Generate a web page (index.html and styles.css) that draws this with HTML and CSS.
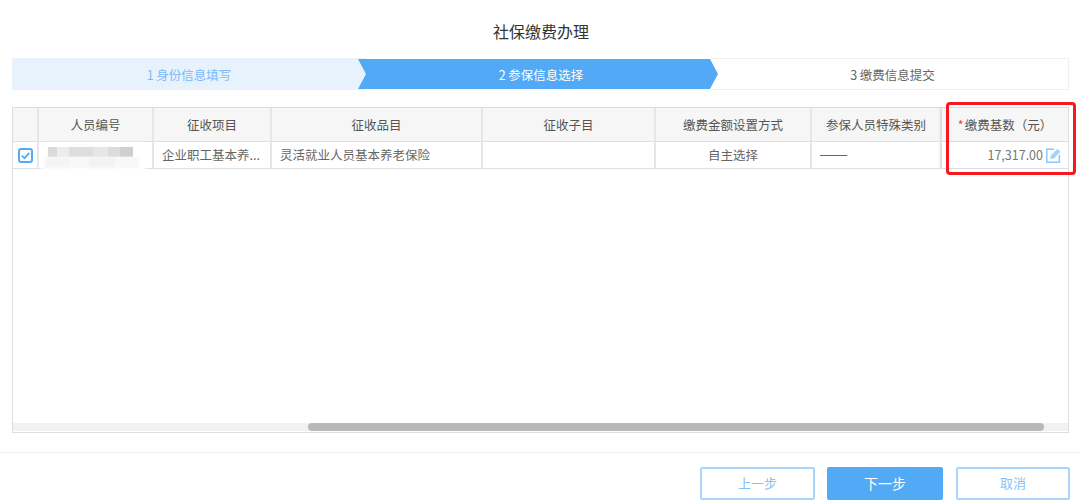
FILE: index.html
```html
<!DOCTYPE html>
<html lang="zh-CN">
<head>
<meta charset="utf-8">
<title>社保缴费办理</title>
<link rel="stylesheet" href="styles.css">
</head>
<body>
<div class="page">
  <h1 class="title">社保缴费办理</h1>
  <div class="steps">
    <div class="step step-done">1 身份信息填写</div>
    <div class="step step-active">2 参保信息选择</div>
    <div class="step step-todo">3 缴费信息提交</div>
  </div>
  <div class="table">
    <div class="row row-head">
      <div class="cell"></div>
      <div class="cell center">人员编号</div>
      <div class="cell center">征收项目</div>
      <div class="cell center">征收品目</div>
      <div class="cell center">征收子目</div>
      <div class="cell center">缴费金额设置方式</div>
      <div class="cell center">参保人员特殊类别</div>
      <div class="cell center fixed"><span class="req">*</span>缴费基数（元）</div>
    </div>
    <div class="row row-body">
      <div class="cell center">
        <span class="checkbox">
          <svg viewBox="0 0 12 12" width="11" height="11"><path d="M2 6.2 L5 9 L10 3.2" fill="none" stroke="#52a9f5" stroke-width="2"/></svg>
        </span>
      </div>
      <div class="cell"></div>
      <div class="cell">企业职工基本养...</div>
      <div class="cell">灵活就业人员基本养老保险</div>
      <div class="cell"></div>
      <div class="cell center">自主选择</div>
      <div class="cell dash">——</div>
      <div class="cell end fixed">
        <span class="amount">17,317.00</span>
        <svg class="edit" viewBox="0 0 15 15" width="15" height="15">
          <path d="M8 1.2 H0.8 V14.2 H13.4 V7" fill="none" stroke="#8cc8f9" stroke-width="1.5"/>
          <path d="M3.8 11.6 L4.6 7.6 L11.4 0.6 L14.8 3.8 L7.8 10.8 Z" fill="#a3d3fa" stroke="#fff" stroke-width="0.6"/>
        </svg>
      </div>
    </div>
    <div class="table-space"></div>
    <div class="scrollbar"><div class="thumb"></div></div>
    <div class="redacted">
      <span class="smear-a"></span>
      <span class="smear-b"></span>
      <span class="smear-c"></span>
    </div>
    <div class="highlight"></div>
  </div>
  <div class="footer">
    <button class="btn btn-prev">上一步</button>
    <button class="btn btn-next">下一步</button>
    <button class="btn btn-cancel">取消</button>
  </div>
</div>
</body>
</html>
```
FILE: styles.css
```css
* { box-sizing: border-box; }
html, body { margin: 0; padding: 0; background: #fff; }
body {
  width: 1080px;
  height: 502px;
  overflow: hidden;
  font-family: "Noto Sans CJK SC", "Noto Sans", sans-serif;
  font-size: 12.5px;
  color: #666;
}
.page { display: flex; flex-direction: column; height: 502px; }
.title {
  margin: 0;
  height: 58px;
  padding: 19px 0 0 2px;
  text-align: center;
  font-size: 16px;
  line-height: 24px;
  font-weight: 400;
  color: #333;
}
.steps {
  display: flex;
  height: 32px;
  margin: 0 11px 0 12px;
}
.step {
  display: flex;
  align-items: center;
  justify-content: center;
  height: 32px;
}
.step-done {
  width: 354px;
  background: #e7f2fd;
  color: #79bbf8;
}
.step-active {
  width: 360px;
  margin-left: -8px;
  padding-left: 6px;
  background: #52a9f5;
  color: #fff;
  position: relative;
  clip-path: polygon(0 1px, 352px 1px, 360px 16px, 352px 31px, 0 31px, 8px 16px);
}
.step-todo {
  width: 359px;
  margin-left: -8px;
  padding-left: 7px;
  border: 1px solid #f1f1f1;
  border-left: 0;
}
.table {
  position: relative;
  display: flex;
  flex-direction: column;
  height: 326px;
  margin: 17px 11px 0 12px;
  border: 1px solid #ddd;
}
.row {
  display: grid;
  grid-template-columns: 26px 115px 118px 211px 173px 156px 130px 1fr;
  border-bottom: 1px solid #e0e0e0;
}
.row-head { height: 34px; background: #f6f6f6; color: #555; }
.row-body { height: 27px; }
.cell {
  display: flex;
  align-items: center;
  min-width: 0;
  padding: 0 8px 2px;
  border-right: 2px solid #e6e6e6;
  white-space: nowrap;
}
.row-head .cell { padding-bottom: 0; }
.cell:last-child { border-right: 0; }
.center { justify-content: center; padding: 0 0 2px; }
.end { justify-content: flex-end; padding: 0 7px 2px 0; gap: 3px; }
.dash { font-family: "Liberation Sans", sans-serif; font-size: 13.5px; }
.fixed { box-shadow: -3px 0 3px rgba(0, 0, 0, 0.04); }
.row-body .fixed { color: #777; }
.req { color: #e5443a; margin-right: 1px; }
.checkbox {
  display: flex;
  align-items: center;
  justify-content: center;
  width: 15px;
  height: 15px;
  margin-top: 2px;
  border: 2px solid #52a9f5;
  border-radius: 3px;
}
.edit { flex: none; margin-top: 2px; }
.table-space { flex: 1; }
.scrollbar {
  height: 8px;
  margin-bottom: 1px;
  padding-left: 295px;
  padding-right: 24px;
  background: #f2f2f2;
}
.thumb { height: 8px; background: #b8b8b8; border-radius: 4px; }
.redacted {
  position: absolute;
  left: 28px;
  top: 36px;
  width: 104px;
  height: 38px;
}
.redacted span { position: absolute; display: block; }
.smear-a {
  left: 0;
  top: 0;
  width: 104px;
  height: 35px;
  background: #fff;
  filter: blur(2px);
}
.smear-b {
  left: 7px;
  top: 3px;
  width: 85px;
  height: 10px;
  background: linear-gradient(90deg, #dadada 0 9px, #ececec 9px 21px, #dedede 21px 45px, #e6e6e6 45px 60px, #dcdcdc 60px 72px, #cfcfcf 72px);
  filter: blur(0.7px);
}
.smear-c {
  left: 4px;
  top: 13px;
  width: 94px;
  height: 11px;
  background: linear-gradient(90deg, #f4f4f4 0 24px, #f8f8f8 24px 44px, #f3f3f3 44px 70px, #f7f7f7 70px);
  filter: blur(1px);
}
.highlight {
  position: absolute;
  left: 933px;
  top: -6px;
  width: 130px;
  height: 73px;
  border: 3px solid #f5191f;
  border-radius: 4px;
}
.footer {
  display: flex;
  flex: 1;
  align-items: flex-start;
  gap: 12px;
  margin-top: 19px;
  padding: 14px 10px 0 700px;
  border-top: 1px solid #f0f0f0;
}
.btn {
  height: 33px;
  padding: 0 0 2px;
  font: inherit;
  font-size: 13px;
  border: 2px solid #a8d5fb;
  border-radius: 2px;
  background: #fff;
  color: #85c2f8;
}
.btn-prev { width: 115px; }
.btn-next { width: 116px; background: #52a9f5; border-color: #52a9f5; color: #fff; font-size: 14px; }
.btn-cancel { width: 114px; margin-left: 1px; }
```
